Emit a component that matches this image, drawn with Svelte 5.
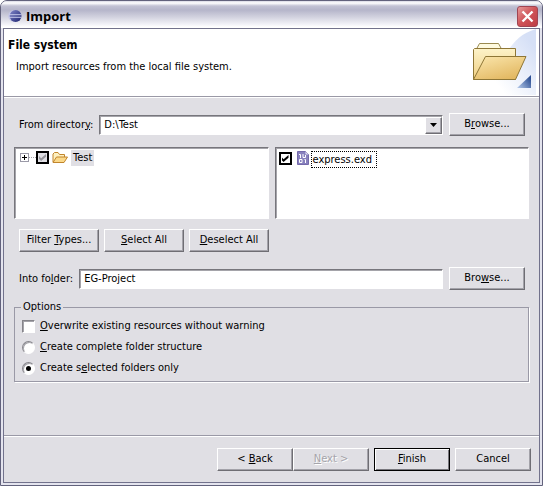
<script>
  let directory = $state('D:\\Test');
  let folder = $state('EG-Project');
  let testChecked = $state(true);
  let fileChecked = $state(true);
  let overwrite = $state(false);
  let structure = $state('selected');
</script>

<div class="window">
  <div class="titlebar">
    <svg class="logo" width="14" height="14" viewBox="0 0 14 14" aria-hidden="true">
      <defs>
        <linearGradient id="ball" x1="0" y1="0" x2="1" y2="1">
          <stop offset="0" stop-color="#7f86c8" />
          <stop offset="1" stop-color="#1c2270" />
        </linearGradient>
      </defs>
      <ellipse cx="5.5" cy="7" rx="5.2" ry="5.8" fill="#c3c4e6" />
      <circle cx="7.6" cy="7" r="5.9" fill="url(#ball)" />
      <path d="M1.5 5.7H13.4M1.5 8.3H13.4" stroke="#d3d6f4" stroke-width="0.9" />
    </svg>
    <span class="title">Import</span>
    <button class="close" aria-label="Close">
      <svg width="13" height="13" viewBox="0 0 13 13"><path d="M1.5 1.5L11.5 11.5M11.5 1.5L1.5 11.5" stroke="#fff" stroke-width="2.4" /></svg>
    </button>
  </div>

  <div class="body">
    <header>
      <div>
        <h1>File system</h1>
        <p>Import resources from the local file system.</p>
      </div>
      <svg class="banner" width="75" height="66" viewBox="0 0 75 66" aria-hidden="true">
        <defs>
          <linearGradient id="sky" x1="0" y1="0.9" x2="0.8" y2="0.1">
            <stop offset="0.2" stop-color="#fff" />
            <stop offset="1" stop-color="#d6e0f6" />
          </linearGradient>
          <linearGradient id="front" x1="0" y1="0" x2="0.6" y2="1">
            <stop offset="0" stop-color="#fbe7ae" />
            <stop offset="1" stop-color="#e3b963" />
          </linearGradient>
          <linearGradient id="rear" x1="0" y1="0" x2="0" y2="1">
            <stop offset="0" stop-color="#fdf3c9" />
            <stop offset="1" stop-color="#efcf83" />
          </linearGradient>
          <linearGradient id="corner" x1="0" y1="1" x2="1" y2="0.3">
            <stop offset="0" stop-color="#b9cdec" />
            <stop offset="1" stop-color="#2c4f94" />
          </linearGradient>
        </defs>
        <path d="M72 0C58 4 50 12 44 22L20 66H72Z" fill="url(#sky)" />
        <path d="M12.5 20L15.5 14.5H34.5L37.5 20Z" fill="#fefadf" stroke="#9a8a50" />
        <path d="M9.500 50.500V20.500L10.500 19.500H51.500V50.500Z" fill="url(#rear)" stroke="#8e7636" />
        <path d="M9.500 50.500L21.500 27.500H62L51.500 50.500Z" fill="url(#front)" stroke="#8e7636" stroke-linejoin="round" />
        <path d="M53 59L67 46V59Z" fill="url(#corner)" />
      </svg>
    </header>

    <main>
      <div class="row">
        <label for="directory">From director<u>y</u>:</label>
        <div class="combo">
          <select id="directory" bind:value={directory}>
            <option value={'D:\\Test'}>D:\Test</option>
          </select>
          <span class="drop"><svg width="7" height="4" viewBox="0 0 7 4"><path d="M0 0H7L3.500 4Z" /></svg></span>
        </div>
        <button class="btn">B<u>r</u>owse...</button>
      </div>

      <div class="panes">
        <div class="pane tree">
          <button class="expand" aria-label="Expand Test"></button>
          <span class="dots"></span>
          <input id="test" class="tick partial" type="checkbox" bind:checked={testChecked} />
          <svg class="folder" width="16" height="13" viewBox="0 0 16 13" aria-hidden="true">
            <path d="M1 11V3L2.500 1.500H6L7.500 3.500H12.500V6" fill="#fdf0c0" stroke="#c1852c" />
            <path d="M1 11.500L4.500 6H15.500L12 11.500Z" fill="#fbd98a" stroke="#c1852c" stroke-linejoin="round" />
          </svg>
          <label class="node" for="test">Test</label>
        </div>
        <div class="pane files">
          <input id="express" class="tick" type="checkbox" bind:checked={fileChecked} />
          <svg class="file" width="12" height="14" viewBox="0 0 12 14" aria-hidden="true">
            <path d="M0.500 0.500H8.500L11.500 3.500V13.500H0.500Z" fill="#8780bd" stroke="#7469ab" />
            <path d="M8.500 0.500V3.500H11.500Z" fill="#dedbf1" />
            <path d="M2 3.500H3.500V7M6 3V6.500H8.500V4M7.500 8.500H8.500V12M2.500 8.500H5V11.500H2.500Z" fill="none" stroke="#fff" />
          </svg>
          <label class="name" for="express">express.exd</label>
        </div>
      </div>

      <div class="row actions">
        <button class="btn">Filter <u>T</u>ypes...</button>
        <button class="btn"><u>S</u>elect All</button>
        <button class="btn"><u>D</u>eselect All</button>
      </div>

      <div class="row">
        <label for="folder">Into fo<u>l</u>der:</label>
        <input id="folder" class="text" type="text" bind:value={folder} />
        <button class="btn">Bro<u>w</u>se...</button>
      </div>

      <fieldset>
        <legend>Options</legend>
        <label class="option"><input class="box" type="checkbox" bind:checked={overwrite} /><span><u>O</u>verwrite existing resources without warning</span></label>
        <label class="option"><input type="radio" name="structure" value="complete" bind:group={structure} /><span><u>C</u>reate complete folder structure</span></label>
        <label class="option"><input type="radio" name="structure" value="selected" bind:group={structure} /><span>Create s<u>e</u>lected folders only</span></label>
      </fieldset>
    </main>

    <footer>
      <div class="pair">
        <button class="btn">&lt; <u>B</u>ack</button>
        <button class="btn" disabled><u>N</u>ext &gt;</button>
      </div>
      <button class="btn default"><u>F</u>inish</button>
      <button class="btn">Cancel</button>
    </footer>
  </div>
</div>

<style>
  :global(body) {
    margin: 0;
    background: #fff;
  }
  .window,
  .window :is(button, input, select) {
    font-family: Tahoma, 'DejaVu Sans Condensed', 'DejaVu Sans', sans-serif;
    font-size: 11px;
    line-height: 14px;
    color: #000;
  }
  .window,
  .window * {
    box-sizing: border-box;
  }
  .window {
    display: flex;
    flex-direction: column;
    min-height: 100vh;
    padding: 0 2px 2px;
    border: 1px solid #62627c;
    border-radius: 7px 7px 0 0;
    background: #e4e4ee;
  }
  .titlebar {
    display: flex;
    align-items: center;
    height: 27px;
    margin: 0 -2px;
    padding: 3px 4px 0 7px;
    border-radius: 6px 6px 0 0;
    background: linear-gradient(#d8d8e4 0, #fff 2px, #c2c2d4 5px, #b5b5ca 9px, #d2d2df 16px, #f5f5fa 24px, #fff 26px);
  }
  .title {
    flex: 1;
    margin-left: 4px;
    font-family: 'Trebuchet MS', 'Open Sans', sans-serif;
    font-size: 13px;
    line-height: 18px;
    font-weight: 700;
  }
  .close {
    display: grid;
    place-items: center;
    width: 21px;
    height: 21px;
    padding: 0;
    border: 1px solid #a04452;
    border-radius: 3px;
    background: linear-gradient(135deg, #e59a9a, #cf5257 50%, #bd3d45);
  }
  .body {
    flex: 1;
    display: flex;
    flex-direction: column;
    border: 1px solid #72728c;
    background: #e0dfe4;
  }
  header {
    display: flex;
    justify-content: space-between;
    height: 68px;
    padding-left: 4px;
    background: #fff;
    border-bottom: 1px solid #9a99a6;
    box-shadow: 0 1px #fff;
  }
  h1 {
    margin: 8px 0 0;
    font-size: 12px;
    line-height: 16px;
    font-weight: 700;
  }
  p {
    margin: 7px 0 0 8px;
  }
  main {
    flex: 1;
    padding: 16px 10px 12px;
  }
  .row {
    display: flex;
    align-items: center;
    gap: 6px;
    padding: 0 4px 0 5px;
  }
  .combo {
    flex: 1;
    position: relative;
  }
  select,
  .text {
    appearance: none;
    display: block;
    width: 100%;
    height: 20px;
    margin: 0;
    padding: 0 4px;
    border: 1px solid;
    border-color: #77767c #fff #fff #77767c;
    border-radius: 0;
    outline: 0;
    background: #fff;
    box-shadow: inset 1px 1px #a5a4aa;
  }
  .text {
    flex: 1;
    min-width: 0;
  }
  .drop {
    position: absolute;
    top: 2px;
    right: 1px;
    bottom: 1px;
    width: 17px;
    display: grid;
    place-items: center;
    pointer-events: none;
  }
  .drop,
  .btn {
    border: 1px solid;
    border-color: #fff #6f6e74 #6f6e74 #fff;
    border-radius: 0;
    background: #e0dfe4;
    box-shadow: inset -1px -1px #a3a2a9;
  }
  .btn {
    flex: none;
    width: 76px;
    height: 23px;
    padding: 0 0 1px;
    white-space: nowrap;
  }
  .btn:disabled {
    color: #a5a4aa;
    text-shadow: 1px 1px #fff;
  }
  .btn.default {
    border-color: #000;
    box-shadow: inset 1px 1px #fff, inset -1px -1px #77767c;
  }
  .panes {
    display: grid;
    grid-template-columns: 1fr 1fr;
    gap: 6px;
    margin-top: 11px;
  }
  .pane {
    display: flex;
    align-items: flex-start;
    height: 72px;
    border: 1px solid;
    border-color: #77767c #fff #fff #77767c;
    background: #fff;
    box-shadow: inset 1px 1px #a5a4aa;
  }
  .tree {
    padding: 2px 5px;
  }
  .files {
    padding: 3px 3px;
  }
  .expand {
    width: 9px;
    height: 9px;
    margin: 3px 0 0;
    padding: 0;
    border: 1px solid #9b9aa8;
    background:
      linear-gradient(#000, #000) center / 5px 1px no-repeat,
      linear-gradient(#000, #000) center / 1px 5px no-repeat,
      #fff;
  }
  .dots {
    width: 7px;
    margin-top: 7px;
    border-top: 1px dotted #a5a4aa;
  }
  .tick {
    appearance: none;
    display: grid;
    place-items: center;
    width: 13px;
    height: 13px;
    margin: 1px 0 0;
    border: 2px solid #000;
    background: #fff;
  }
  .window .tick.partial {
    background: #e0dfe4;
    color: #98979d;
  }
  .tick:checked::before,
  .box:checked::before {
    content: '';
    width: 7px;
    height: 7px;
    background: currentColor;
    clip-path: polygon(0 30%, 30% 60%, 100% 0, 100% 40%, 30% 100%, 0 70%);
  }
  .folder {
    margin: 1px 3px 0;
  }
  .file {
    margin: 0 2px 0 5px;
  }
  .node {
    height: 16px;
    padding: 0 2px;
    line-height: 15px;
    background: #e0dfe4;
  }
  .name {
    height: 17px;
    padding: 0 4px 0 1px;
    border: 1px dotted #000;
    line-height: 15px;
  }
  .actions {
    gap: 5px;
    margin: 10px 0 15px;
  }
  .actions .btn {
    width: 80px;
  }
  fieldset {
    display: flex;
    flex-direction: column;
    gap: 7px;
    min-width: 0;
    margin: 10px 0 0;
    padding: 5px 7px 6px;
    border: 1px solid #9a99a6;
    box-shadow: 1px 1px #fff;
  }
  legend {
    padding: 0 2px;
    margin-left: -1px;
  }
  .option {
    display: flex;
    align-items: center;
    gap: 5px;
  }
  .option input {
    appearance: none;
    display: grid;
    place-items: center;
    width: 13px;
    height: 13px;
    margin: 0;
    border: 1px solid;
    border-color: #85848a #fff #fff #85848a;
    background: #fff;
    box-shadow: inset 1px 1px #a5a4aa;
  }
  .option input[type='radio'] {
    border-radius: 50%;
  }
  .option input[type='radio']:checked::before {
    content: '';
    width: 5px;
    height: 5px;
    border-radius: 50%;
    background: #000;
  }
  footer {
    display: flex;
    justify-content: flex-end;
    gap: 5px;
    padding: 12px 8px 11px;
    border-top: 1px solid #9a99a6;
    box-shadow: inset 0 1px #fff;
  }
  .pair {
    display: flex;
  }
  u {
    text-underline-offset: 1px;
    text-decoration-thickness: 1px;
  }
</style>
